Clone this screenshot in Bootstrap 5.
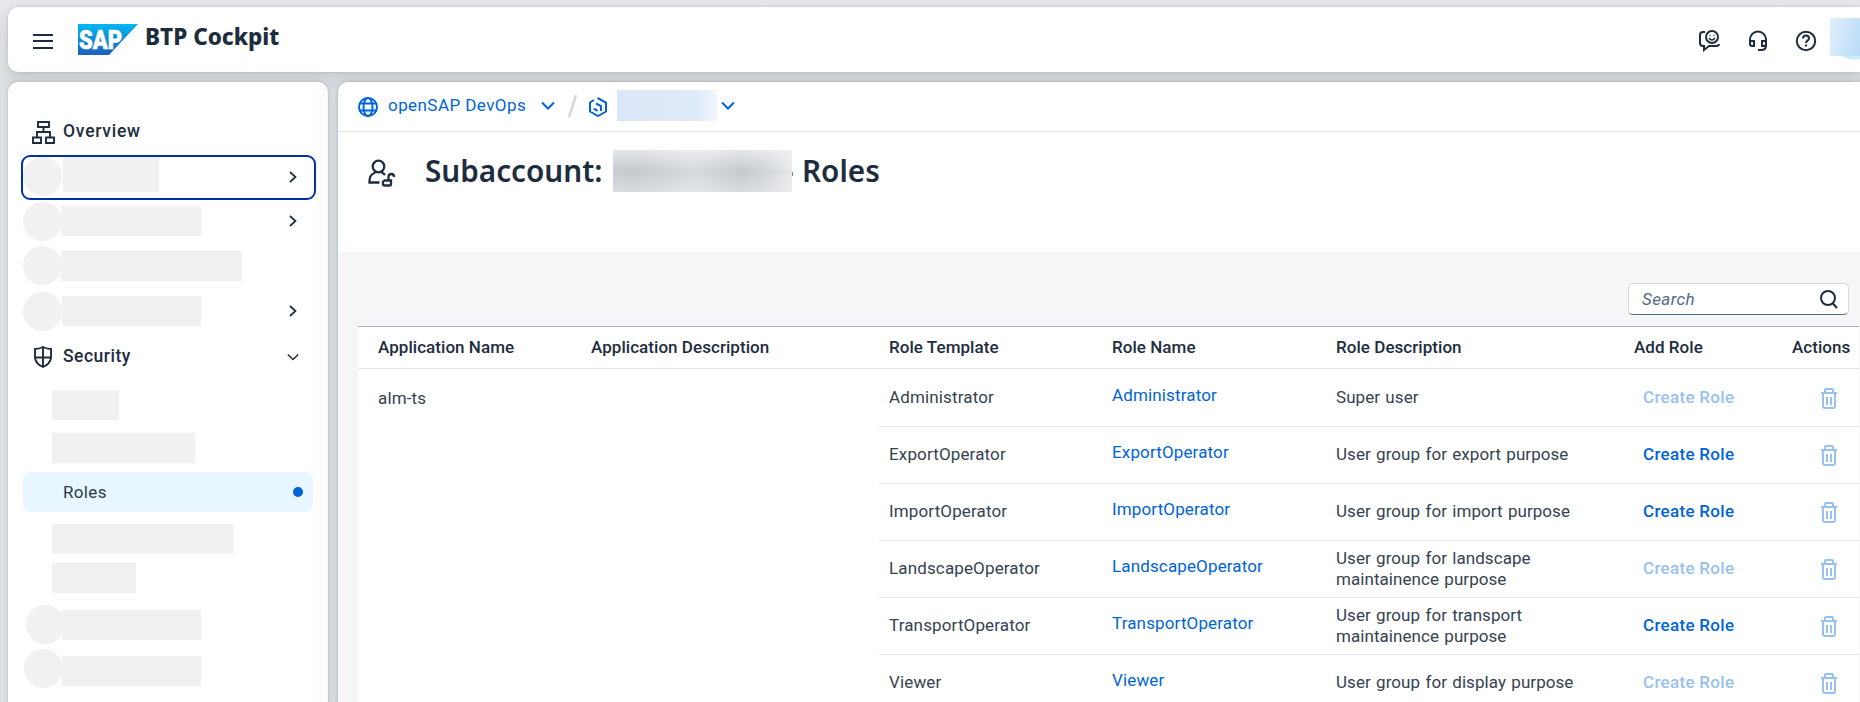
<!DOCTYPE html>
<html lang="en">
<head>
<meta charset="utf-8">
<meta name="viewport" content="width=device-width, initial-scale=1">
<title>BTP Cockpit</title>
<link href="https://cdn.jsdelivr.net/npm/bootstrap@5.3.0/dist/css/bootstrap.min.css" rel="stylesheet">
<style>
:root{--ink:#1d2d3e;--blue:#0064d9;--line:#e3e4e5}
body{font-family:Roboto,"Liberation Sans",sans-serif;font-size:17px;line-height:21px;color:var(--ink);width:1860px;height:702px;overflow:hidden;background:linear-gradient(180deg,#e8e9ec 0,#dfe3e6 80px,#dfe3e6 100%)}
svg{display:block;flex:none;fill:none;stroke:currentColor;stroke-width:2}
.shellbar{height:65px;margin:7px 0 10px 8px;padding:0 0 0 25px;background:#fff;border-radius:10px 0 0 10px;box-shadow:0 0 3px rgba(50,65,80,.2),0 6px 18px rgba(50,65,80,.16);width:1852px}
.product{font:800 22.5px/28px "Noto Sans",sans-serif;padding-bottom:5px;margin-left:7px;width:145px;white-space:nowrap}
.logo-txt{font:900 25px Roboto,"Liberation Sans",sans-serif;fill:#fff;stroke:#fff;stroke-width:.6}
.avatar{width:30px;height:42px;padding-bottom:4px;margin-top:-1px;background:radial-gradient(circle at 24px 18px,#c8edff 23px,transparent 24px)}
.avatar div{height:38px;background:linear-gradient(105deg,#e0f0fc,#b9dbf8)}
.side{width:320px;height:630px;background:linear-gradient(90deg,#fff 300px,#fafcfb);border-radius:10px 10px 0 0;padding:26px 12px 0 13px;box-shadow:0 0 3px rgba(50,65,80,.25),0 0 16px rgba(50,65,80,.08)}
.side svg{stroke-width:1.9}
.side .chev{stroke-width:1.7}
.content-pane{width:1522px;height:630px;margin-left:10px;background:#f5f6f7;border-radius:10px 0 0 0;box-shadow:0 0 3px rgba(50,65,80,.3),0 0 14px rgba(50,65,80,.12);overflow:hidden}
.nav-row{height:45px;padding:0 19px 3px 2px;font-weight:500;font-size:17.5px}
.nav-row.top{height:47px;padding:0 19px 0 11px}
.nav-row.sec{padding:0 19px 2px 13px}
.nav-row.focus{border:2px solid #0032a5;border-radius:9px;padding:0 17px 2px 0}
.dotph{width:39px;height:39px;border-radius:50%;background:#f1f1f1;flex:none}
.barph{height:30px;background:#f1f1f1}
.sub{margin-left:31px}
.active-row{height:40px;margin:9px 3px 12px 2px;border-radius:7px;background:#e8f7ff;padding:0 10px 0 40px;letter-spacing:.35px;color:#2b3a4a}
.active-row i{width:10px;height:10px;border-radius:50%;background:var(--blue)}
.crumbs{height:50px;background:#fff;border-bottom:1px solid #e0e1e2;color:var(--blue);padding:0 0 2px 20px}
.crumbs .ph{width:100px;height:31px;background:linear-gradient(90deg,#dae7f8,#dfebf9 80%,#f2f6fd)}
.titlebar{height:120px;background:#fff;padding:18px 0 0 30px}
.titlebar h1{font:600 29.7px/41px "Noto Sans",sans-serif;margin:0}
.titlebar .ph{width:179px;height:42px;margin:0 0 0 11px;background:linear-gradient(180deg,rgba(240,241,243,.75),rgba(200,204,208,.25) 50%,rgba(232,234,236,.6)),linear-gradient(90deg,#c6cace,#c4c8cc 15%,#dcdfe1 46%,#c3c8cc 72%,#d3d6d9 85%,#f2f3f4)}
.titlebar .dash{width:1px;height:4px;background:#7c8794;margin:22px 9px 0 0}
.finder{width:221px;height:32px;margin:31px 11px 11px auto;background:#fff;border:1px solid #d3d8de;border-bottom:1px solid #556b82;border-radius:5px;padding:0 10px 0 13px;font-style:italic;color:#556b82;letter-spacing:.4px}
.roles{width:1501px;margin:0 1px 0 20px;table-layout:fixed;border-top:1px solid #a8b3bd;--bs-table-bg:#fff;--bs-table-color:var(--ink);color:var(--ink)}
.roles th{height:42px;padding:0 0 1px 10px;font-weight:500;vertical-align:middle;border-bottom:1px solid var(--line);white-space:nowrap;letter-spacing:.05px}
.roles td{height:57px;padding:0 0 1px 10px;vertical-align:middle;border-bottom:1px solid var(--line);color:#35424f;letter-spacing:.14px}
.roles tbody tr:first-child td{height:58px;padding-bottom:0}
.roles th:first-child,.roles td.app{padding-left:20px}
.roles td.app,.roles td.appd{vertical-align:top;padding-top:19px}
.roles a{color:var(--blue);text-decoration:none;display:block;padding-bottom:5px}
.roles td.desc{word-spacing:1px;padding-right:50px;letter-spacing:.06px}
.roles td.mk{padding-left:19px;font-weight:500;color:var(--blue);letter-spacing:.3px}
.roles td.mk.off{color:#99c1f0}
.roles td.bin{padding-left:38px;color:#99c1f0}
</style>
</head>
<body>
<svg width="0" height="0" class="position-absolute"><defs>
<symbol id="trash" viewBox="0 0 18 22"><path d="M1 6h16M5 5V3q0-1 1-1h6q1 0 1 1v2M3 7v12q0 2 2 2h8q2 0 2-2V7M7 10v8M11 10v8"/></symbol>
<symbol id="right" viewBox="0 0 8 12"><path d="M1 1l5.500 5L1 11"/></symbol>
<symbol id="down" viewBox="0 0 14 9"><path d="M1 1.500l6 6 6-6"/></symbol>
</defs></svg>
<header class="shellbar d-flex align-items-center">
  <svg width="21" height="17" viewBox="0 0 21 17" style="margin-top:4px"><path d="M0 2h20M0 8h20M0 15h20"/></svg>
  <svg width="60" height="31" viewBox="0 0 60 31" style="margin-left:24px;margin-top:-1px"><defs><linearGradient id="g" x2="0" y2="1"><stop stop-color="#00b8f1"/><stop offset="1" stop-color="#1f5fbf"/></linearGradient></defs><path d="M0 0h60L31 31H0z" fill="url(#g)" stroke="none"/><text class="logo-txt" x="1" y="24.500" textLength="43" lengthAdjust="spacingAndGlyphs">SAP</text></svg>
  <div class="product">BTP Cockpit</div>
  <div class="d-flex align-items-center ms-auto">
    <svg width="22" height="22" viewBox="0 0 22 22" style="margin-top:2px"><path d="M6 2H4Q1 2 1 5v8q0 3 3 3h1v4l5-4h7q3 0 3-2"/><circle cx="13" cy="7" r="6"/><path d="M10 8q3 4 6 0M10.500 5.500h1M14.500 5.500h1" stroke-width="1.500"/></svg>
    <svg width="20" height="22" viewBox="0 0 20 22" style="margin:2px 0 0 27px"><path d="M2 14V9.500a8 8 0 0 1 16 0v6q0 4.500-5 4.500h-3M2 11h4v5H4q-2 0-2-2zM18 11h-4v5h2q2 0 2-2z"/></svg>
    <svg width="22" height="22" viewBox="0 0 22 22" style="margin:2px 13px 0 27px"><circle cx="11" cy="11" r="9.200"/><path d="M8 8.500q0-3 3-3t3 3c0 2.200-3 2-3 4.500M11 14.500v2"/></svg>
    <div class="avatar"><div></div></div>
  </div>
</header>
<div class="d-flex" style="margin-left:8px">
  <nav class="side flex-shrink-0">
    <div class="nav-row top d-flex align-items-center">
      <svg width="23" height="23" viewBox="0 0 23 23" style="margin-top:2px"><path d="M6 1h11v5H6zM1 16.500h8V22H1zM14 16.500h8V22h-8zM11.500 6v5M5 16v-5h13v5"/></svg>
      <span style="margin-left:8px;letter-spacing:.75px">Overview</span>
    </div>
    <div class="nav-row focus d-flex align-items-center">
      <div class="dotph"></div><div class="barph" style="width:96px;height:35px;margin:-4px 0 0 1px"></div>
      <svg class="chev ms-auto" width="8" height="12"><use href="#right"/></svg>
    </div>
    <div class="nav-row d-flex align-items-center">
      <div class="dotph"></div><div class="barph" style="width:140px;margin-left:-1px"></div>
      <svg class="chev ms-auto" width="8" height="12"><use href="#right"/></svg>
    </div>
    <div class="nav-row d-flex align-items-center" style="padding-bottom:4px">
      <div class="dotph"></div><div class="barph" style="width:181px;margin-left:-1px"></div>
    </div>
    <div class="nav-row d-flex align-items-center">
      <div class="dotph"></div><div class="barph" style="width:139px;margin-top:-1px"></div>
      <svg class="chev ms-auto" width="8" height="12"><use href="#right"/></svg>
    </div>
    <div class="nav-row sec d-flex align-items-center">
      <svg width="18" height="22" viewBox="0 0 18 22"><path d="M9 1Q5 3 1 3v9q1 6 8 9 7-3 8-9V3q-4 0-8-2zM9 1v20M1 11.500h16"/></svg>
      <span style="margin-left:11px;letter-spacing:.5px">Security</span>
      <svg class="chev ms-auto" width="12" height="8" style="margin-right:-2px"><use href="#down"/></svg>
    </div>
    <div class="barph sub" style="width:67px;margin-top:10px"></div>
    <div class="barph sub" style="width:143px;margin-top:13px"></div>
    <div class="active-row d-flex align-items-center"><span>Roles</span><i class="ms-auto"></i></div>
    <div class="barph sub" style="width:181px"></div>
    <div class="barph sub" style="width:84px;margin-top:9px"></div>
    <div class="d-flex" style="margin:12px 0 0 5px"><div class="dotph"></div><div class="barph" style="width:139px;margin:5px 0 0 -3px"></div></div>
    <div class="d-flex" style="margin:5px 0 0 3px"><div class="dotph"></div><div class="barph" style="width:139px;margin:7px 0 0 -1px"></div></div>
  </nav>
  <main class="content-pane flex-shrink-0">
    <div class="crumbs d-flex align-items-center">
      <svg width="20" height="20" viewBox="0 0 20 20" style="margin-top:2px"><circle cx="10" cy="10" r="9"/><ellipse cx="10" cy="10" rx="4.500" ry="9"/><path d="M2 6.500h16M2 13.500h16"/></svg>
      <span style="margin-left:10px;width:137px;white-space:nowrap;letter-spacing:.43px">openSAP DevOps</span>
      <svg width="14" height="9" style="margin-left:16px"><use href="#down"/></svg>
      <svg width="11" height="22" viewBox="0 0 11 22" style="margin:1px 0 0 12px;color:#d5d7da"><path d="M9 0L2 22" stroke-width="2.500"/></svg>
      <svg width="20" height="20" viewBox="0 0 20 20" style="margin:3px 0 0 10px"><path d="M6 3L2 5.500v9l8 4.500 8-4.500v-9L9.500 1M8 6.500l5 2.500v5M5.500 12q2 0 4 2"/></svg>
      <div class="ph" style="margin-left:9px"></div>
      <svg width="14" height="9" style="margin-left:4px"><use href="#down"/></svg>
    </div>
    <div class="titlebar d-flex">
      <svg width="28" height="28" viewBox="0 0 28 28" style="margin:9px 29px 0 0;stroke-width:2.300"><circle cx="10.500" cy="7.500" r="5.800"/><path d="M11.500 23.500H1.500v-2q0-6 6-8M13.500 13.300q2 1 3.500 2.700M15.500 21.500h7.500V25q0 1.500-1.500 1.500h-5q-1.500 0-1.500-1.500v-3.500M20.500 21v-3q0-3 2.800-3t2.800 3"/></svg>
      <h1 class="d-flex"><span style="width:177px;white-space:nowrap">Subaccount:</span><span class="ph"></span><span class="dash"></span><span>Roles</span></h1>
    </div>
    <div class="finder d-flex align-items-center justify-content-between"><span>Search</span>
      <svg width="18" height="19" viewBox="0 0 18 19" style="color:#1d2d3e"><circle cx="8" cy="8" r="7"/><path d="M12.500 13l4.500 5"/></svg></div>
    <table class="table roles mb-0">
      <colgroup><col style="width:223px"><col style="width:298px"><col style="width:223px"><col style="width:224px"><col style="width:298px"><col style="width:158px"><col style="width:77px"></colgroup>
      <thead><tr><th>Application Name</th><th>Application Description</th><th>Role Template</th><th>Role Name</th><th>Role Description</th><th>Add Role</th><th>Actions</th></tr></thead>
      <tbody>
        <tr><td class="app" rowspan="6">alm-ts</td><td class="appd" rowspan="6"></td><td>Administrator</td><td><a href="#">Administrator</a></td><td class="desc">Super user</td><td class="mk off">Create Role</td><td class="bin"><svg width="18" height="22"><use href="#trash"/></svg></td></tr>
        <tr><td>ExportOperator</td><td><a href="#">ExportOperator</a></td><td class="desc">User group for export purpose</td><td class="mk">Create Role</td><td class="bin"><svg width="18" height="22"><use href="#trash"/></svg></td></tr>
        <tr><td>ImportOperator</td><td><a href="#">ImportOperator</a></td><td class="desc">User group for import purpose</td><td class="mk">Create Role</td><td class="bin"><svg width="18" height="22"><use href="#trash"/></svg></td></tr>
        <tr><td>LandscapeOperator</td><td><a href="#">LandscapeOperator</a></td><td class="desc">User group for landscape maintainence purpose</td><td class="mk off">Create Role</td><td class="bin"><svg width="18" height="22"><use href="#trash"/></svg></td></tr>
        <tr><td>TransportOperator</td><td><a href="#">TransportOperator</a></td><td class="desc">User group for transport maintainence purpose</td><td class="mk">Create Role</td><td class="bin"><svg width="18" height="22"><use href="#trash"/></svg></td></tr>
        <tr><td>Viewer</td><td><a href="#">Viewer</a></td><td class="desc">User group for display purpose</td><td class="mk off">Create Role</td><td class="bin"><svg width="18" height="22"><use href="#trash"/></svg></td></tr>
      </tbody>
    </table>
  </main>
</div>
<script src="https://cdn.jsdelivr.net/npm/bootstrap@5.3.0/dist/js/bootstrap.bundle.min.js"></script>
</body>
</html>
